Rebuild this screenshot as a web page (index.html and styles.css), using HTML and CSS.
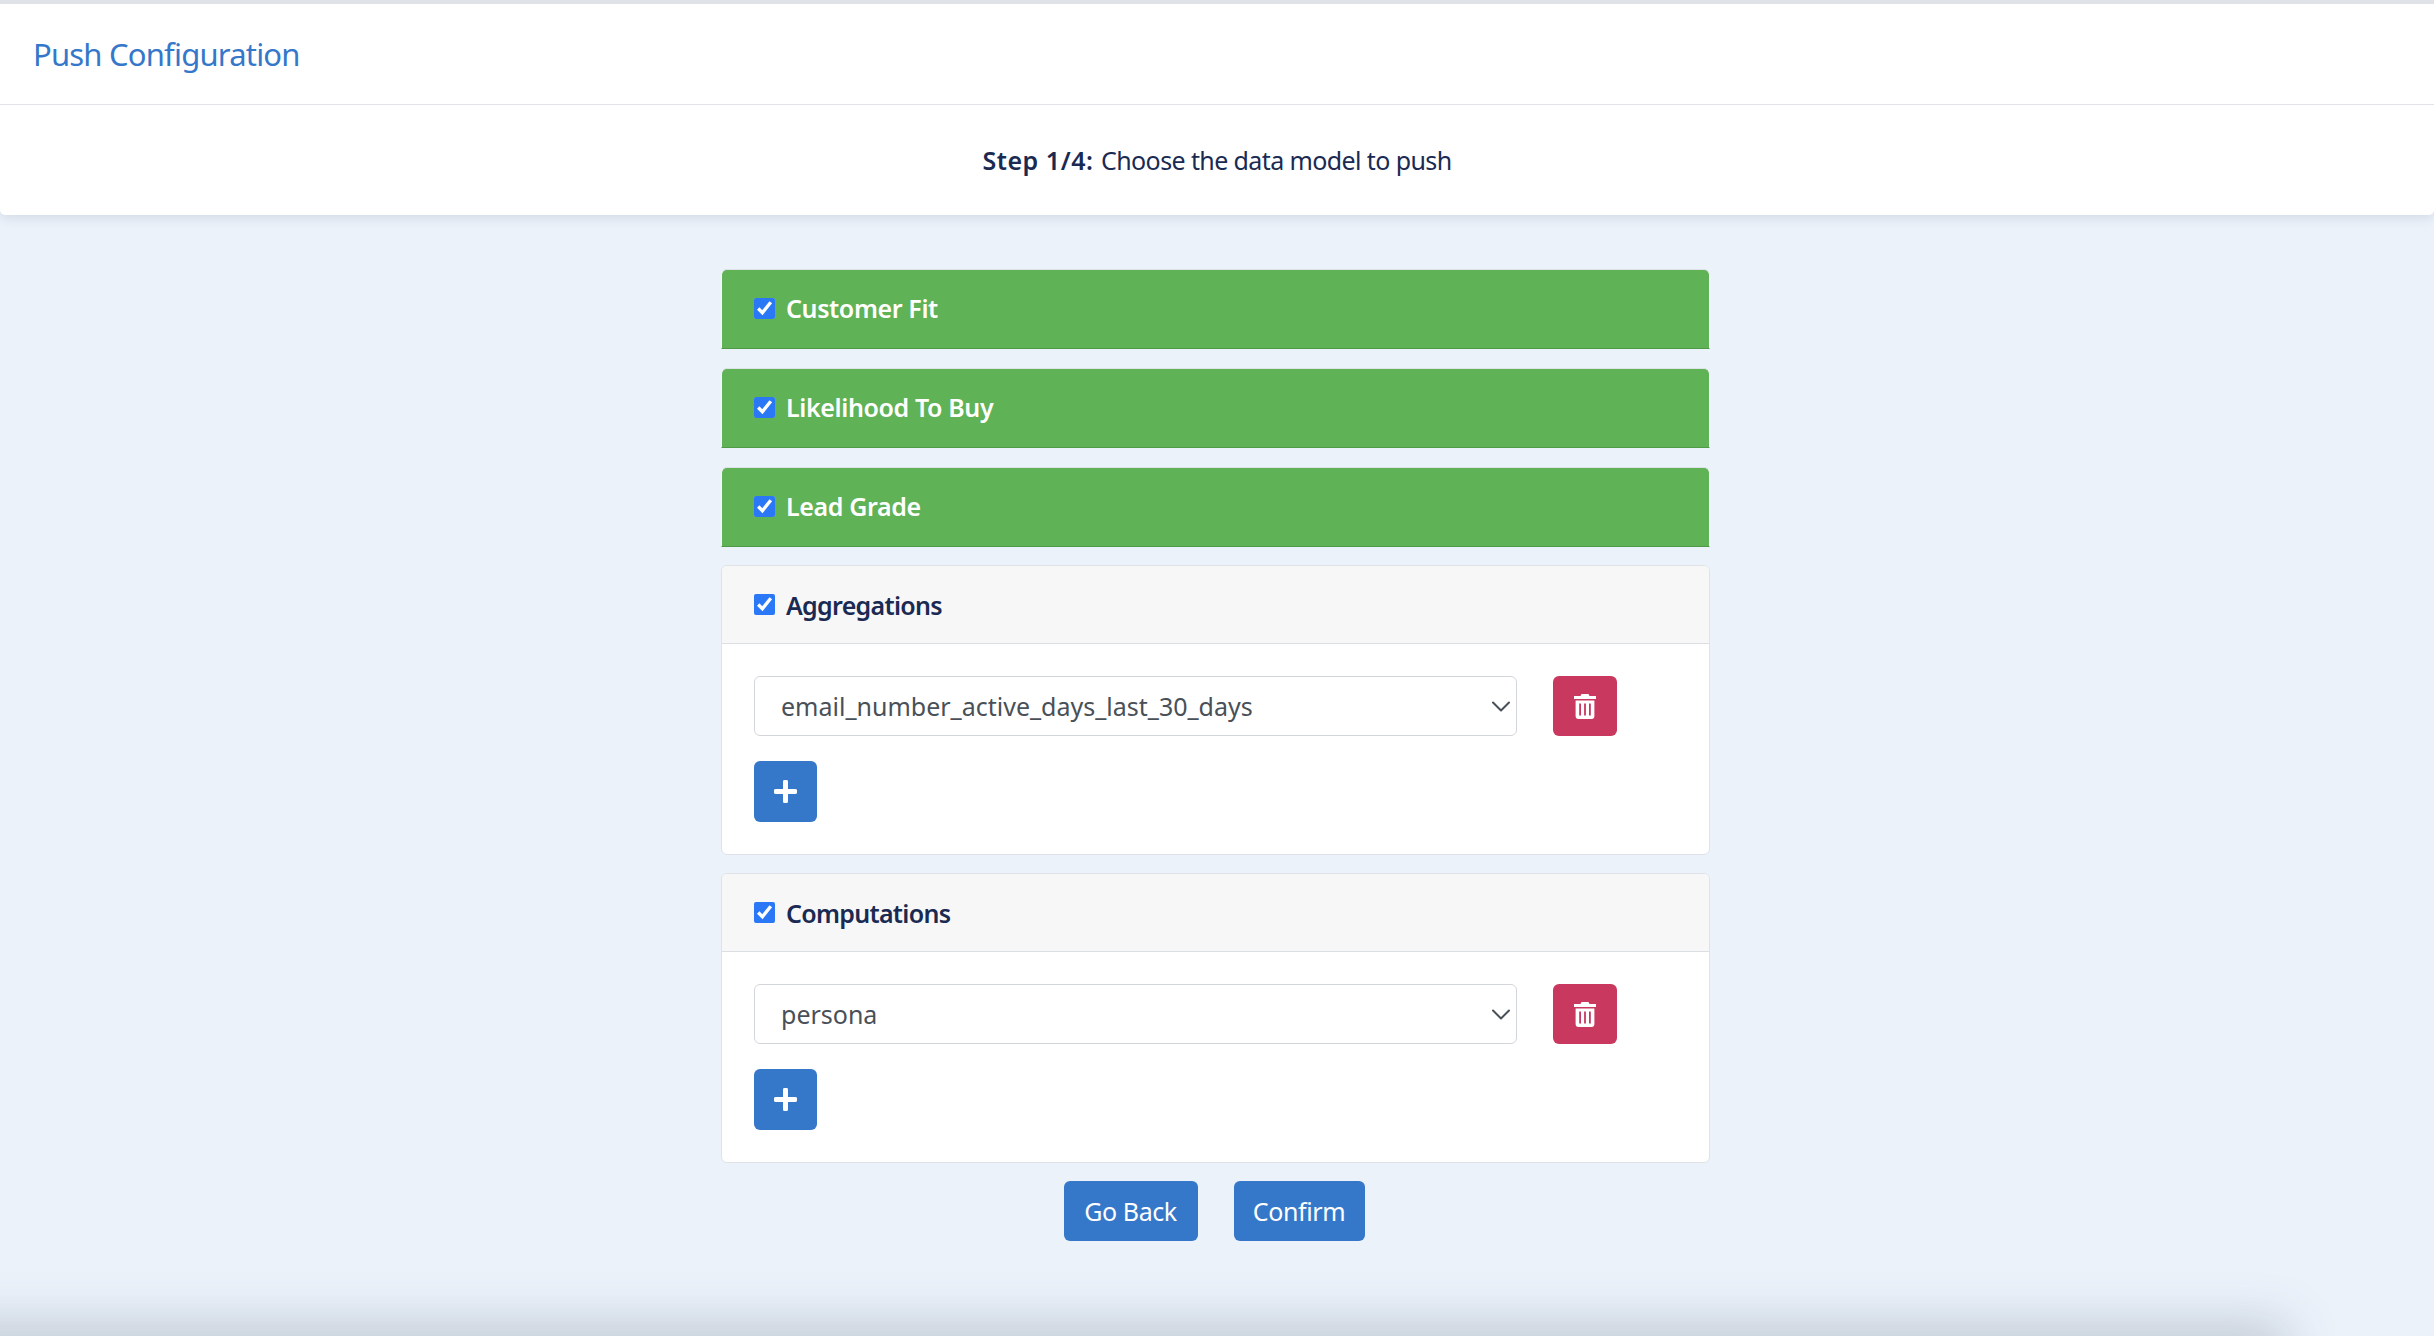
FILE: index.html
```html
<!DOCTYPE html>
<html lang="en">

<head>
    <meta charset="UTF-8">
    <meta name="viewport" content="width=device-width, initial-scale=1.0">
    <title>Push Configuration</title>
    <link rel="stylesheet" href="styles.css">
</head>

<body>
    <header class="top-card">
        <div class="top-title">Push Configuration</div>
        <div class="top-step"><strong>Step 1/4:</strong> Choose the data model to push</div>
    </header>

    <main class="content">
        <div class="model-card model-card-on">
            <label class="model-head"><input type="checkbox" checked> Customer Fit</label>
        </div>
        <div class="model-card model-card-on">
            <label class="model-head"><input type="checkbox" checked> Likelihood To Buy</label>
        </div>
        <div class="model-card model-card-on">
            <label class="model-head"><input type="checkbox" checked> Lead Grade</label>
        </div>

        <div class="model-card">
            <label class="model-head model-head-light"><input type="checkbox" checked> Aggregations</label>
            <div class="model-body">
                <div class="field-row">
                    <div class="select-wrap">
                        <select>
                            <option>email_number_active_days_last_30_days</option>
                        </select>
                        <svg class="chevron" viewBox="0 0 18 11"><path d="M1 1.5l8 8 8-8" fill="none" stroke="#495057" stroke-width="2" stroke-linecap="round" stroke-linejoin="round"/></svg>
                    </div>
                    <button class="btn btn-delete" aria-label="Delete">
                        <svg viewBox="0 0 22 25"><path fill="#fff" d="M7.5 0h7l1 2H22v3H0V2h6.5zM1.6 6.5h18.8V22a3 3 0 0 1-3 3H4.6a3 3 0 0 1-3-3zM5.2 9.5v12h1.8v-12zM10.100 9.500v12h1.800v-12zM15 9.500v12h1.800v-12z" fill-rule="evenodd"/></svg>
                    </button>
                </div>
                <button class="btn btn-add" aria-label="Add">
                    <svg viewBox="0 0 23 23"><path d="M11.500 2v19M2 11.500h19" stroke="#fff" stroke-width="5" stroke-linecap="round"/></svg>
                </button>
            </div>
        </div>

        <div class="model-card">
            <label class="model-head model-head-light"><input type="checkbox" checked> Computations</label>
            <div class="model-body">
                <div class="field-row">
                    <div class="select-wrap">
                        <select>
                            <option>persona</option>
                        </select>
                        <svg class="chevron" viewBox="0 0 18 11"><path d="M1 1.5l8 8 8-8" fill="none" stroke="#495057" stroke-width="2" stroke-linecap="round" stroke-linejoin="round"/></svg>
                    </div>
                    <button class="btn btn-delete" aria-label="Delete">
                        <svg viewBox="0 0 22 25"><path fill="#fff" d="M7.5 0h7l1 2H22v3H0V2h6.5zM1.6 6.5h18.8V22a3 3 0 0 1-3 3H4.6a3 3 0 0 1-3-3zM5.2 9.5v12h1.8v-12zM10.100 9.500v12h1.800v-12zM15 9.500v12h1.800v-12z" fill-rule="evenodd"/></svg>
                    </button>
                </div>
                <button class="btn btn-add" aria-label="Add">
                    <svg viewBox="0 0 23 23"><path d="M11.500 2v19M2 11.500h19" stroke="#fff" stroke-width="5" stroke-linecap="round"/></svg>
                </button>
            </div>
        </div>

        <div class="actions">
            <button class="btn btn-text btn-back">Go Back</button>
            <button class="btn btn-text btn-confirm">Confirm</button>
        </div>
    </main>

    <div class="page-foot"></div>
</body>

</html>
```

FILE: styles.css
```css
* {
    box-sizing: border-box;
}

html,
body {
    height: 100%;
}

body {
    margin: 0;
    height: 1336px;
    overflow: hidden;
    position: relative;
    background-color: #ebf2fa;
    font-family: "Noto Sans", Roboto, sans-serif;
    font-size: 25px;
    color: #1a2a52;
}

.top-card {
    background-color: #fff;
    border-top: 4px solid #dfe3e8;
    box-shadow: 0 3px 12px rgba(40, 60, 90, 0.13);
    border-radius: 0 0 5px 5px;
    height: 215px;
}

.top-title {
    height: 101px;
    padding-left: 33px;
    display: flex;
    align-items: center;
    font-size: 31px;
    letter-spacing: -0.8px;
    color: #3578c9;
    border-bottom: 1px solid #e2e4e7;
}

.top-step {
    height: 110px;
    display: flex;
    align-items: center;
    justify-content: center;
    gap: 0.3em;
    letter-spacing: -0.6px;
}

.top-step strong {
    font-weight: 600;
    letter-spacing: 0.55px;
}

.content {
    width: 989px;
    margin: 54px auto 0 721px;
    display: flex;
    flex-direction: column;
}

.model-card {
    background-color: #fff;
    border: 1.5px solid #dfe3e8;
    border-radius: 6px;
    margin-bottom: 18px;
    overflow: hidden;
}

.model-card-on {
    height: 80px;
    margin-bottom: 19px;
    background-color: #5fb256;
    color: #fff;
    border-bottom-color: #4e9a46;
    border-bottom-left-radius: 0;
    border-bottom-right-radius: 0;
    border-left-color: #f4f7f4;
    border-right-color: #f4f7f4;
}

.model-card-on:nth-child(3) {
    margin-bottom: 18px;
}

.model-head {
    display: flex;
    align-items: center;
    gap: 11px;
    height: 76px;
    padding-left: 32px;
    font-weight: 600;
    letter-spacing: -0.38px;
}

.model-head input {
    width: 21px;
    height: 21px;
    margin: 0;
    accent-color: #2a78f5;
}

.model-head-light {
    height: 78px;
    background-color: #f7f7f7;
    border-bottom: 1.5px solid #dcdfe2;
    letter-spacing: -0.7px;
}

.model-body {
    padding: 32px 32px 32px;
}

.field-row {
    display: flex;
    gap: 36px;
    margin-bottom: 25px;
}

.select-wrap {
    position: relative;
    width: 763px;
    height: 60px;
}

.select-wrap select {
    appearance: none;
    width: 100%;
    height: 100%;
    padding: 0 60px 0 26px;
    border: 1.5px solid #d2d6da;
    border-radius: 6px;
    background-color: #fff;
    font: inherit;
    color: #495057;
}

.chevron {
    position: absolute;
    right: 7px;
    top: 25px;
    width: 18px;
    height: 11px;
}

.btn {
    border: none;
    border-radius: 6px;
    height: 60px;
    padding: 0;
    display: flex;
    align-items: center;
    justify-content: center;
    font: inherit;
    color: #fff;
}

.btn-delete {
    width: 64px;
    background-color: #c9385f;
}

.btn-delete svg {
    width: 22px;
    height: 25px;
}

.btn-add {
    width: 63px;
    height: 61px;
    background-color: #3578c9;
}

.btn-add svg {
    width: 23px;
    height: 23px;
}

.actions {
    display: flex;
    justify-content: center;
    gap: 36px;
    padding-right: 3px;
}

.btn-text {
    background-color: #3578c9;
    letter-spacing: -0.4px;
}

.btn-back {
    width: 134px;
}

.btn-confirm {
    width: 131px;
}

.page-foot {
    position: absolute;
    left: -60px;
    bottom: -30px;
    width: 2335px;
    height: 30px;
    box-shadow: 0 0 50px 12px rgba(70, 80, 100, 0.26);
}
```
